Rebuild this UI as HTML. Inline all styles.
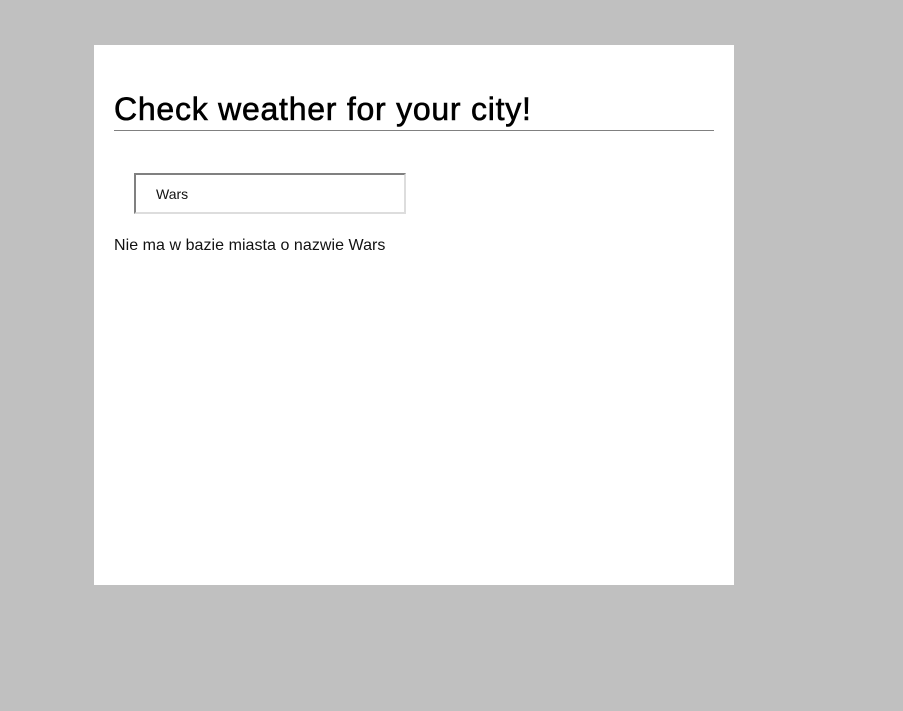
<!DOCTYPE html>
<html><head><style>
html,body{margin:0;padding:0;background:#c0c0c0;width:903px;height:711px;overflow:hidden;font-family:"Liberation Sans",sans-serif}
.card{position:absolute;left:94px;top:45px;width:640px;height:540px;background:#fff}
h1{position:absolute;left:20px;top:44px;margin:0;font-size:32px;font-weight:normal;color:#000;letter-spacing:0.75px;-webkit-text-stroke:0.6px #000;line-height:40px;white-space:nowrap}
.line{position:absolute;left:20px;top:85px;width:600px;height:1px;background:#808080}
.inp{position:absolute;left:40px;top:128px;width:268px;height:37px;border-style:solid;border-width:2px;border-color:#808080 #ddd #ddd #808080;box-sizing:content-box}
.inp span{position:absolute;left:20px;top:11px;font-size:14px;color:#111}
.msg{position:absolute;left:20px;top:192px;font-size:16px;color:#111;white-space:nowrap;letter-spacing:0.05px}
</style></head><body>
<div class="card">
<h1>Check weather for your city!</h1>
<div class="line"></div>
<div class="inp"><span>Wars</span></div>
<div class="msg">Nie ma w bazie miasta o nazwie Wars</div>
</div>
</body></html>
